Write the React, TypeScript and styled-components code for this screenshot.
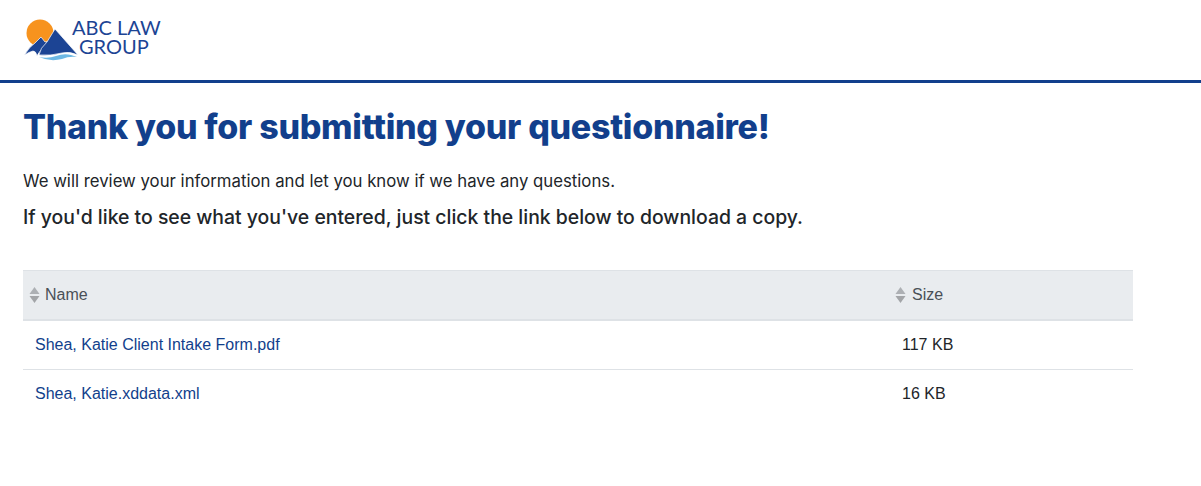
import { createGlobalStyle } from "styled-components";
import styled from "styled-components";

const colors = {
  navy: "#123f8c",
  logoBlue: "#1c4494",
  text: "#212529",
  headerBg: "#e9ecef",
  border: "#dee2e6",
};

const GlobalStyle = createGlobalStyle`
  html, body {
    margin: 0;
    padding: 0;
    background: #fff;
  }
`;

const Page = styled.div`
  width: 1201px;
  height: 486px;
  overflow: hidden;
  box-sizing: border-box;
`;

const TopBar = styled.header`
  height: 80px;
  border-bottom: 3px solid ${colors.navy};
  padding-left: 24px;
  display: flex;
  align-items: flex-start;
`;

const Logo = styled.div`
  display: flex;
  align-items: flex-start;
  margin-top: 18px;
`;

const LogoText = styled.div`
  display: flex;
  flex-direction: column;
  align-items: center;
  margin-left: -6px;
  font-family: "Lato", sans-serif;
  font-size: 20px;
  line-height: 19px;
  color: ${colors.logoBlue};
`;

const GroupLine = styled.span`
  margin-right: 5px;
`;

const Content = styled.main`
  padding: 24px 23px 0;
`;

const Title = styled.h1`
  margin: 0;
  font-family: "Inter", sans-serif;
  font-size: 34px;
  line-height: 40px;
  font-weight: 800;
  letter-spacing: -0.3px;
  color: ${colors.navy};
`;

const Lead = styled.p`
  margin: 22px 0 0;
  font-family: "Inter", sans-serif;
  font-size: 16.75px;
  line-height: 24px;
  color: ${colors.text};
`;

const SubLead = styled.h2`
  margin: 12px 0 0;
  font-family: "Inter", sans-serif;
  font-size: 19.4px;
  line-height: 24px;
  font-weight: 500;
  color: ${colors.text};
`;

const Table = styled.div`
  width: 1110px;
  margin-top: 41px;
  font-family: "Liberation Sans", sans-serif;
  font-size: 16px;
`;

const HeaderRow = styled.div`
  display: grid;
  grid-template-columns: 866px 1fr;
  height: 48px;
  background: ${colors.headerBg};
  border-top: 1px solid ${colors.border};
  border-bottom: 2px solid ${colors.border};
`;

const HeaderCell = styled.div<{ $gap: number }>`
  display: flex;
  align-items: center;
  gap: ${(p) => p.$gap}px;
  padding-left: 6px;
  color: #495057;
`;

const Row = styled.div<{ $last?: boolean }>`
  display: grid;
  grid-template-columns: 866px 1fr;
  height: 48px;
  border-bottom: 1px solid ${(p) => (p.$last ? "transparent" : colors.border)};
`;

const NameCell = styled.a`
  display: flex;
  align-items: center;
  padding-left: 12px;
  color: ${colors.navy};
  text-decoration: none;
`;

const SizeCell = styled.div`
  display: flex;
  align-items: center;
  padding-left: 13px;
  color: ${colors.text};
`;

const SortIcon = () => (
  <svg width="11" height="16" viewBox="0 0 11 16">
    <path d="M5.5 0 L10.5 7 L0.5 7 Z" fill="#adb0b4" />
    <path d="M5.5 16 L10.5 9 L0.5 9 Z" fill="#a3a5a8" />
  </svg>
);

const LogoMark = () => (
  <svg width="54" height="44" viewBox="0 0 54 44">
    <circle cx="16" cy="15" r="13.5" fill="#f7931e" />
    {/* small left peak */}
    <path d="M0.5 37 Q5 29 11 25 L17 19 L21 24 L25 23 L20 30 Q15 33 13 38 Q12 33 9 33 Q5 34 0.5 37 Z" fill="#1c4494" stroke="#fff" strokeWidth="0.7" />
    {/* main peak */}
    <path d="M31 11 L54 37 Q46 33 38 35 Q27 38 15 37 Q16 30 23 24 Z" fill="#1c4494" stroke="#fff" strokeWidth="0.7" />
    {/* water */}
    <path d="M15 39 Q24 41 32 38 Q40 35 47 37 L53 39 Q45 38 38 41 Q26 44 15 39 Z" fill="#6db8e4" />
  </svg>
);

export default function App() {
  return (
    <Page>
      <GlobalStyle />
      <TopBar>
        <Logo>
          <LogoMark />
          <LogoText>
            <span>ABC LAW</span>
            <GroupLine>GROUP</GroupLine>
          </LogoText>
        </Logo>
      </TopBar>
      <Content>
        <Title>Thank you for submitting your questionnaire!</Title>
        <Lead>We will review your information and let you know if we have any questions.</Lead>
        <SubLead>If you'd like to see what you've entered, just click the link below to download a copy.</SubLead>
        <Table>
          <HeaderRow>
            <HeaderCell $gap={5}><SortIcon />Name</HeaderCell>
            <HeaderCell $gap={6}><SortIcon />Size</HeaderCell>
          </HeaderRow>
          <Row>
            <NameCell href="#">Shea, Katie Client Intake Form.pdf</NameCell>
            <SizeCell>117 KB</SizeCell>
          </Row>
          <Row $last>
            <NameCell href="#">Shea, Katie.xddata.xml</NameCell>
            <SizeCell>16 KB</SizeCell>
          </Row>
        </Table>
      </Content>
    </Page>
  );
}
